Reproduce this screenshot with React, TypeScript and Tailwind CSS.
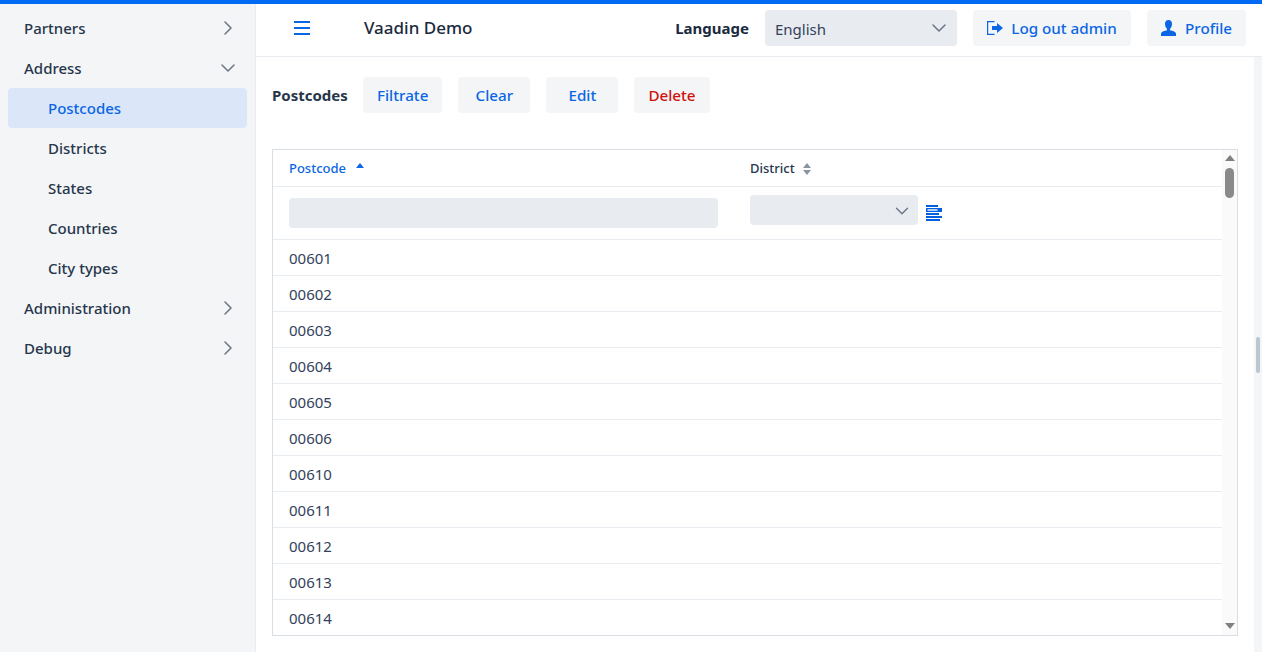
import { ChevronDown, ChevronRight } from "lucide-react";

const ui = "font-['Noto_Sans',sans-serif]";

const navItems = [
  { label: "Partners", kind: "closed" },
  { label: "Address", kind: "open" },
  { label: "Postcodes", kind: "active" },
  { label: "Districts", kind: "sub" },
  { label: "States", kind: "sub" },
  { label: "Countries", kind: "sub" },
  { label: "City types", kind: "sub" },
  { label: "Administration", kind: "closed" },
  { label: "Debug", kind: "closed" },
];

const postcodes = ["00601", "00602", "00603", "00604", "00605", "00606", "00610", "00611", "00612", "00613", "00614"];

function NavRow({ label, kind }: { label: string; kind: string }) {
  if (kind === "active") {
    return (
      <div className="mx-2 flex h-10 items-center rounded bg-[#dbe7f9] pl-10 text-[15px] font-medium text-[#0a66e4]">
        {label}
      </div>
    );
  }
  return (
    <div className={`mx-2 flex h-10 items-center justify-between pr-[7px] text-[15px] font-medium text-[#27364b] ${kind === "sub" ? "pl-10" : "pl-4"}`}>
      {label}
      {kind === "closed" && <ChevronRight size={24} strokeWidth={1.5} className="text-[#6a7686]" />}
      {kind === "open" && <ChevronDown size={24} strokeWidth={1.5} className="text-[#6a7686]" />}
    </div>
  );
}

function ActionButton({ label, danger }: { label: string; danger?: boolean }) {
  return (
    <button
      type="button"
      className={`h-9 min-w-[72px] rounded bg-[#f3f5f7] px-[14px] text-[15.2px] font-medium ${danger ? "text-[#d0120c]" : "text-[#0a66e4]"}`}
    >
      {label}
    </button>
  );
}

export default function App() {
  return (
    <div className={`${ui} flex h-[652px] w-[1262px] flex-col overflow-hidden border-t-4 border-[#006af5] bg-white`}>
      <div className="flex min-h-0 flex-1">
        <aside className="w-[256px] shrink-0 border-r border-[#e8ebef] bg-[#f3f5f7] pt-1">
          {navItems.map((item) => (
            <NavRow key={item.label} label={item.label} kind={item.kind} />
          ))}
        </aside>

        <div className="flex min-w-0 flex-1 flex-col">
          <header className="flex h-[53px] shrink-0 items-center border-b border-[#e8ebef] pb-1 pl-[38px] pr-4">
            <svg width="16" height="14" viewBox="0 0 16 14" className="text-[#0a66e4]">
              <path d="M0 1h16M0 7h16M0 13h16" stroke="currentColor" strokeWidth="2" fill="none" />
            </svg>
            <div className="ml-[54px] text-[17px] font-medium text-[#1b2a3e]">Vaadin Demo</div>
            <div className="ml-auto mr-4 text-[15px] font-bold text-[#1b2a3e]">Language</div>
            <div className="flex h-9 w-[192px] items-center justify-between rounded bg-[#e8ebef] pl-[10px] pr-[6px] text-[15px] text-[#33425a]">
              <span className="pt-0.5">English</span>
              <ChevronDown size={24} strokeWidth={1.5} className="text-[#6a7686]" />
            </div>
            <button type="button" className="ml-4 flex h-9 w-[158px] items-center justify-center gap-2 rounded bg-[#f3f5f7] text-[15.2px] font-medium text-[#0a66e4]">
              <svg width="16" height="14" viewBox="0 0 16 14" fill="none">
                <path d="M7.500.6H.6v12.800h6.900" stroke="currentColor" strokeWidth="1.200" />
                <path d="M5 5h5V2l6 5-6 5V9H5z" fill="currentColor" />
              </svg>
              Log out admin
            </button>
            <button type="button" className="ml-4 flex h-9 w-[99px] items-center justify-center gap-[9px] rounded bg-[#f3f5f7] text-[15.2px] font-medium text-[#0a66e4]">
              <svg width="15" height="16" viewBox="0 0 15 16" fill="currentColor">
                <path d="M7.500 0C5.300 0 4 1.600 4 3.800 4 6 5 8.200 6 9v1.200c-2.400.6-5.500 1.400-6 3V16h15v-2.800c-.5-1.600-3.600-2.400-6-3V9c1-.8 2-3 2-5.200C11 1.600 9.700 0 7.500 0z" />
              </svg>
              Profile
            </button>
          </header>

          <div className="flex min-h-0 flex-1">
            <main className="flex min-w-0 flex-1 flex-col pb-4 pl-4 pr-4 pt-5">
              <div className="flex items-center gap-4">
                <div className="w-[75px] shrink-0 whitespace-nowrap text-[15px] font-bold text-[#27364b]">Postcodes</div>
                <ActionButton label="Filtrate" />
                <ActionButton label="Clear" />
                <ActionButton label="Edit" />
                <ActionButton label="Delete" danger />
              </div>

              <div className="mt-9 flex min-h-0 flex-1 overflow-hidden border border-[#d9dee4]">
                <div className="min-w-0 flex-1 overflow-hidden">
                  <div className="flex h-[37px] items-center border-b border-[#e8ebef] pt-0.5 text-[13px] font-medium">
                    <div className="flex w-[461px] items-center gap-[10px] pl-4 text-[#0a66e4]">
                      Postcode
                      <svg width="8" height="8" viewBox="0 0 8 8" className="mb-[6px]">
                        <path d="M4 1l4 5H0z" fill="currentColor" />
                      </svg>
                    </div>
                    <div className="flex items-center gap-2 pl-4 text-[#27364b]">
                      District
                      <svg width="8" height="12" viewBox="0 0 8 12" className="text-[#8a94a2]">
                        <path d="M4 0l4 5H0zM4 12L0 7h8z" fill="currentColor" />
                      </svg>
                    </div>
                  </div>

                  <div className="flex h-[53px] border-b border-[#e8ebef]">
                    <div className="w-[461px] px-4 pt-[11px]">
                      <div className="h-[30px] rounded bg-[#e8ebef]" />
                    </div>
                    <div className="flex items-start pl-4 pt-2">
                      <div className="flex h-[30px] w-[168px] items-center justify-end rounded bg-[#e8ebef] pr-[5px] pt-0.5">
                        <ChevronDown size={22} strokeWidth={1.5} className="text-[#6a7686]" />
                      </div>
                      <svg width="16" height="17" viewBox="0 0 16 17" className="ml-2 mt-[10px] text-[#0060df]">
                        <path d="M0 0h12v2H0zM0 3h16v4H0zM0 8h13v2H0zM0 11h16v2H0zM0 14h14v2H0z" fill="currentColor" />
                        <path d="M1.500 4.300h10v1.400h-10z" fill="#fff" />
                      </svg>
                    </div>
                  </div>

                  {postcodes.map((code) => (
                    <div key={code} className="flex h-9 items-center border-b border-[#e8ebef] pl-4 pt-0.5 text-[15px] text-[#33425a]">
                      {code}
                    </div>
                  ))}
                </div>

                <div className="flex w-[15px] shrink-0 flex-col items-center bg-[#fafafa] pt-[5px]">
                  <svg width="10" height="6" viewBox="0 0 10 6" className="text-[#808080]">
                    <path d="M5 0l5 6H0z" fill="currentColor" />
                  </svg>
                  <div className="mt-[7px] h-[30px] w-[9px] rounded-full bg-[#8a8a8a]" />
                  <svg width="10" height="6" viewBox="0 0 10 6" className="mb-[6px] mt-auto text-[#808080]">
                    <path d="M5 6L0 0h10z" fill="currentColor" />
                  </svg>
                </div>
              </div>
            </main>

            <div className="w-2 shrink-0 bg-[#f3f5f7] pl-[2px] pt-[280px]">
              <div className="h-9 w-1 rounded-sm bg-[#bcc6d0]" />
            </div>
          </div>
        </div>
      </div>
    </div>
  );
}
